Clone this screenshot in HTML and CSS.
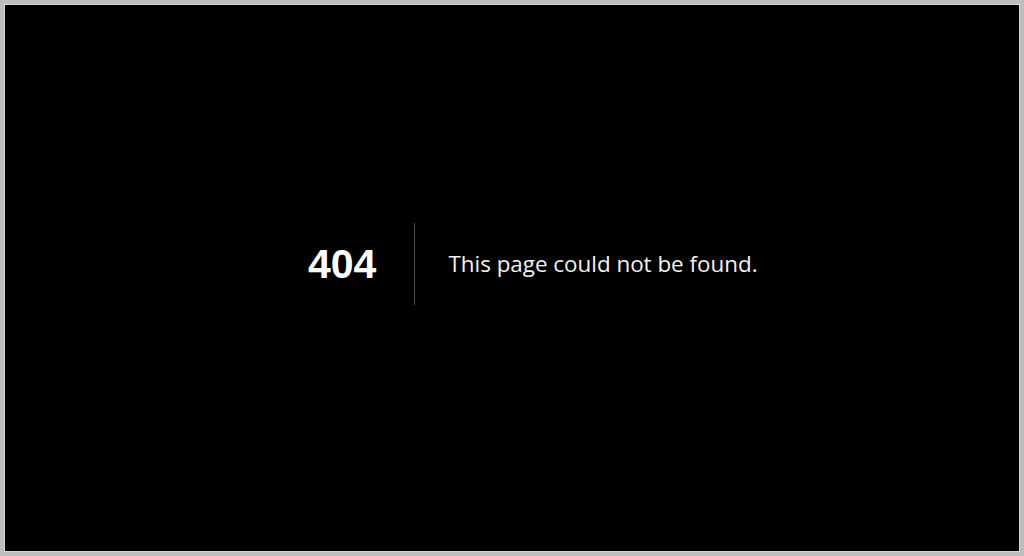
FILE: index.html
```html
<!DOCTYPE html>
<html lang="en">
<head>
<meta charset="utf-8">
<title>404: This page could not be found.</title>
<link rel="stylesheet" href="styles.css">
</head>
<body>
<div class="frame">
  <div class="error">
    <h1 class="code">404</h1>
    <h2 class="message">This page could not be found.</h2>
  </div>
</div>
</body>
</html>
```

FILE: styles.css
```css
html, body {
  margin: 0;
  padding: 0;
  background: #000;
}
.frame {
  box-sizing: border-box;
  width: 1024px;
  height: 556px;
  border: 4px solid #bdbdbd;
  box-shadow: inset 0 0 0 1px #d6d6d6;
  background: #000;
  color: #fff;
  display: flex;
  align-items: flex-start;
  padding: 219px 0 0 304px;
}
.error {
  display: flex;
  align-items: flex-start;
}
.code {
  margin: 0 33px 0 0;
  padding: 0 38px 0 0;
  font-family: "Liberation Sans", Arial, sans-serif;
  font-size: 41px;
  font-weight: 700;
  line-height: 82px;
  border-right: 1px solid rgba(255, 255, 255, 0.3);
}
.message {
  margin: 0;
  font-family: "Open Sans", "Noto Sans", sans-serif;
  font-size: 22.4px;
  font-weight: 400;
  line-height: 82px;
  color: #f2f2f2;
}
```
